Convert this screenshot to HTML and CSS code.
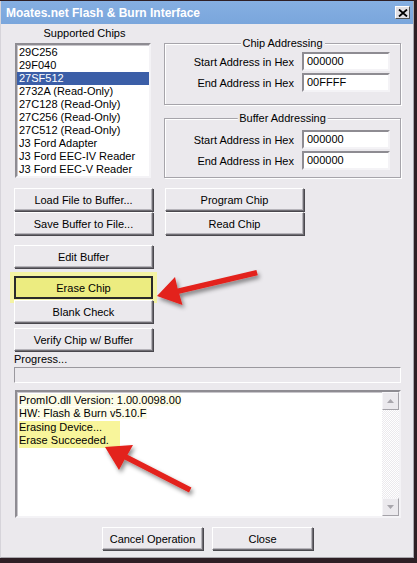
FILE: index.html
```html
<!DOCTYPE html>
<html lang="en">
<head>
    <meta charset="UTF-8">
    <title>Moates.net Flash &amp; Burn Interface</title>
    <link rel="stylesheet" href="styles.css">
</head>
<body>
    <div class="window">
        <div class="titlebar">
            <span class="title">Moates.net Flash &amp; Burn Interface</span>
            <span class="close-btn">
                <svg width="10" height="8" viewBox="0 0 10 8"><path d="M1 0.5 L9 7.5 M9 0.5 L1 7.5" stroke="#000" stroke-width="1.8"/></svg>
            </span>
        </div>
        <div class="client">
            <div class="top-row">
                <div class="chips">
                    <div class="chips-label">Supported Chips</div>
                    <ul class="listbox">
                        <li>29C256</li>
                        <li>29F040</li>
                        <li class="selected">27SF512</li>
                        <li>2732A (Read-Only)</li>
                        <li>27C128 (Read-Only)</li>
                        <li>27C256 (Read-Only)</li>
                        <li>27C512 (Read-Only)</li>
                        <li>J3 Ford Adapter</li>
                        <li>J3 Ford EEC-IV Reader</li>
                        <li>J3 Ford EEC-V Reader</li>
                    </ul>
                </div>
                <div class="groups">
                    <div class="group group-chip">
                        <span class="group-title">Chip Addressing</span>
                        <div class="field"><label>Start Address in Hex</label><span class="input">000000</span></div>
                        <div class="field"><label>End Address in Hex</label><span class="input">00FFFF</span></div>
                    </div>
                    <div class="group group-buffer">
                        <span class="group-title">Buffer Addressing</span>
                        <div class="field"><label>Start Address in Hex</label><span class="input">000000</span></div>
                        <div class="field"><label>End Address in Hex</label><span class="input">000000</span></div>
                    </div>
                </div>
            </div>

            <div class="file-buttons">
                <button class="btn">Load File to Buffer...</button>
                <button class="btn">Program Chip</button>
                <button class="btn">Save Buffer to File...</button>
                <button class="btn">Read Chip</button>
            </div>

            <div class="action-buttons">
                <button class="btn edit">Edit Buffer</button>
                <button class="btn highlight">Erase Chip</button>
                <button class="btn blank">Blank Check</button>
                <button class="btn verify">Verify Chip w/ Buffer</button>
            </div>

            <div class="progress-label">Progress...</div>
            <div class="progress"></div>

            <div class="log">
                <div class="log-text">
                    <span class="soft">PromIO.dll Version: 1.00.0098.00</span><br>
                    <span class="soft">HW: Flash &amp; Burn v5.10.F</span><br>
                    <span class="mark">Erasing Device...<br>Erase Succeeded.</span>
                </div>
                <div class="scrollbar">
                    <span class="scroll-btn"><svg width="7" height="4" viewBox="0 0 7 4"><path d="M0 4 L3.5 0 L7 4 Z" fill="#a8a6ac"/></svg></span>
                    <span class="scroll-track"></span>
                    <span class="scroll-btn"><svg width="7" height="4" viewBox="0 0 7 4"><path d="M0 0 L3.5 4 L7 0 Z" fill="#a8a6ac"/></svg></span>
                </div>
            </div>

            <div class="bottom-buttons">
                <button class="btn">Cancel Operation</button>
                <button class="btn">Close</button>
            </div>
        </div>
    </div>

    <svg class="arrows" width="417" height="563" viewBox="0 0 417 563">
        <defs>
            <filter id="shadow" x="-20%" y="-50%" width="140%" height="200%">
                <feDropShadow dx="2" dy="3" stdDeviation="2" flood-color="#000" flood-opacity="0.45"/>
            </filter>
        </defs>
        <polygon filter="url(#shadow)" fill="#e3201b"
            points="157,296 175,277 177.6,288.5 256.4,270 257.8,275.2 179.2,293.8 182.5,305"/>
        <polygon filter="url(#shadow)" fill="#e3201b"
            points="105,447 133,445 127.5,454.8 191.4,487.6 189,492.4 124.6,459.6 119,470"/>
    </svg>
</body>
</html>
```

FILE: styles.css
```css
* {
    box-sizing: border-box;
}

body {
    margin: 0;
    background: #2e1f25;
    font-family: 'Liberation Sans', Arial, sans-serif;
    font-size: 11px;
    color: #000;
    position: relative;
    width: 417px;
    height: 563px;
    overflow: hidden;
}

.window {
    width: 414px;
    margin-top: 1px;
    background: #ebe9ed;
    border: 1px solid #d6d4da;
    border-top: 0;
    border-right-color: #a9a7ad;
    border-bottom-color: #a9a7ad;
}

.titlebar {
    height: 23px;
    background: linear-gradient(#85afe2, #7aa6dc);
    display: flex;
    align-items: center;
    justify-content: space-between;
    padding: 0 3px 0 5px;
}

.title {
    color: #fff;
    font-weight: bold;
    font-size: 12px;
}

.close-btn {
    width: 15px;
    height: 13px;
    background: #e2e0e4;
    border: 1px solid;
    border-color: #fff #555 #555 #fff;
    display: flex;
    align-items: center;
    justify-content: center;
}

.client {
    padding: 0 0 7px 13px;
}

.top-row {
    display: flex;
    gap: 13px;
}

.chips {
    width: 137px;
}

.chips-label {
    line-height: 18px;
    text-align: center;
    padding-left: 4px;
}

.listbox {
    list-style: none;
    margin: 1px 0 0 1px;
    padding: 1px 0 0;
    width: 136px;
    height: 135px;
    background: #fff;
    border: 2px solid;
    border-color: #8e8c92 #f4f3f6 #f4f3f6 #8e8c92;
    box-shadow: inset 1px 1px 0 #c8c6cb;
}

.listbox li {
    height: 13px;
    line-height: 13px;
    padding-left: 2px;
    white-space: nowrap;
}

.listbox li.selected {
    background: #3b5ea7;
    color: #fff;
}

.groups {
    width: 237px;
    padding-top: 19px;
}

.group {
    position: relative;
    border: 1px solid #a6a4aa;
    box-shadow: 1px 1px 0 #fff, inset 1px 1px 0 #fff;
    display: flex;
    flex-direction: column;
    gap: 2px;
}

.group-chip {
    padding: 8px 0 12px;
}

.group-buffer {
    margin-top: 13px;
    padding: 11px 0 7px;
}

.group-title {
    position: absolute;
    top: -8px;
    left: 50%;
    transform: translateX(-50%);
    background: #ebe9ed;
    padding: 0 2px;
    line-height: 14px;
    white-space: nowrap;
}

.field {
    display: flex;
    align-items: center;
    justify-content: flex-end;
    gap: 8px;
    padding-right: 10px;
    height: 19px;
}

.input {
    width: 88px;
    height: 19px;
    background: #fff;
    border: 2px solid;
    border-color: #8e8c92 #f4f3f6 #f4f3f6 #8e8c92;
    padding: 0 3px;
    line-height: 15px;
}

.btn {
    font-family: inherit;
    font-size: 11px;
    color: #000;
    height: 23px;
    width: 139px;
    padding: 0;
    background: #ebe9ed;
    border: 1px solid;
    border-color: #fff #6f6d73 #6f6d73 #fff;
    box-shadow: inset -1px -1px 0 #b6b4ba, 1px 1px 0 #4a484e;
}

.file-buttons {
    margin-top: 10px;
    display: grid;
    grid-template-columns: 139px 139px;
    column-gap: 12px;
    row-gap: 1px;
}

.action-buttons {
    display: flex;
    flex-direction: column;
    align-items: flex-start;
}

.action-buttons .edit {
    margin-top: 10px;
}

.action-buttons .highlight {
    margin-top: 8px;
    background: #ecec80;
    border: 2px solid #2a2a2a;
    box-shadow: 0 0 0 4px #f4f3a3;
}

.action-buttons .blank {
    margin-top: 1px;
}

.action-buttons .verify {
    margin-top: 5px;
}

.progress-label {
    line-height: 14px;
    padding-top: 1px;
}

.progress {
    margin-top: 1px;
    width: 387px;
    height: 16px;
    border: 1px solid;
    border-color: #9a989e #fff #fff #9a989e;
    background: #ebe9ed;
}

.log {
    margin: 7px 0 0 1px;
    width: 386px;
    height: 128px;
    background: #fff;
    border: 2px solid;
    border-color: #8e8c92 #f4f3f6 #f4f3f6 #8e8c92;
    box-shadow: inset 1px 1px 0 #c8c6cb;
    display: flex;
}

.log-text {
    flex: 1;
    padding: 2px 0 0 2px;
    line-height: 13.4px;
}

.log-text .soft {
    background: #fdfce6;
}

.log-text .mark {
    display: inline-block;
    background: #f8f59b;
    width: 101px;
}

.scrollbar {
    width: 17px;
    display: flex;
    flex-direction: column;
}

.scroll-btn {
    height: 18px;
    background: #ebe9ed;
    border: 1px solid;
    border-color: #f6f5f8 #a4a2a8 #a4a2a8 #f6f5f8;
    display: flex;
    align-items: center;
    justify-content: center;
}

.scroll-track {
    flex: 1;
    background: repeating-conic-gradient(#ebe9ed 0 25%, #fff 0 50%) 0 0 / 2px 2px;
}

.bottom-buttons {
    margin-top: 9px;
    display: flex;
    justify-content: center;
    gap: 9px;
    padding-right: 12px;
}

.bottom-buttons .btn {
    width: 101px;
}

.arrows {
    position: absolute;
    top: 0;
    left: 0;
    pointer-events: none;
}
```
